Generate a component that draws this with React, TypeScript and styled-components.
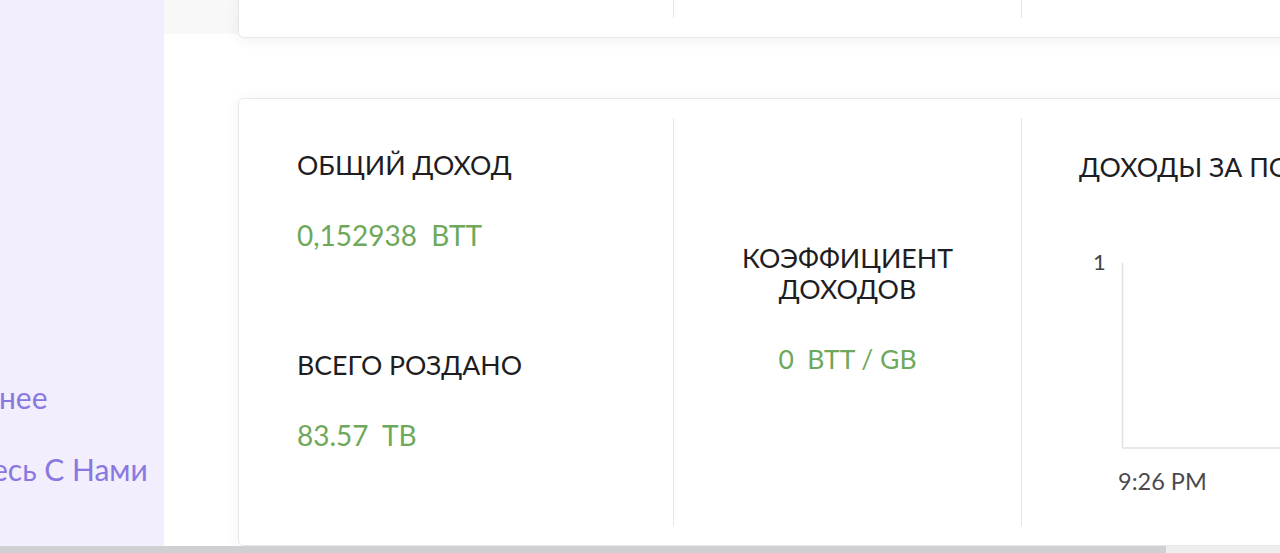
import React from 'react';
import styled, {createGlobalStyle} from 'styled-components';

const GlobalStyle = createGlobalStyle`
    html, body {
        margin: 0;
        padding: 0;
        height: 100%;
        overflow: hidden;
        background: #ffffff;
        font-family: Lato, "Noto Sans", sans-serif;
    }
    #root {
        height: 100%;
    }
`;

const Page = styled.div`
    height: 100vh;
    display: flex;
    flex-direction: column;
`;

const Body = styled.div`
    flex: 1;
    display: flex;
    min-height: 0;
    overflow: hidden;
`;

const Sidebar = styled.aside`
    width: 164px;
    flex-shrink: 0;
    background: #f2eefe;
    overflow: hidden;
    display: flex;
    flex-direction: column;
    justify-content: flex-end;
    padding-bottom: 61px;
    box-sizing: border-box;
`;

const NavLink = styled.a<{$shift: number}>`
    display: block;
    white-space: nowrap;
    margin-left: -${p => p.$shift}px;
    font-size: 30px;
    line-height: 32px;
    color: #8878e0;
    text-decoration: none;
    & + & {
        margin-top: 40px;
    }
`;

const Main = styled.main`
    flex: 1;
    min-width: 0;
    display: flex;
    flex-direction: column;
`;

const TopBand = styled.div`
    background: #f8f8f9;
    height: 34px;
    padding-left: 74px;
`;

const Section = styled.section`
    padding: 64px 0 0 74px;
`;

const Card = styled.div`
    width: 1200px;
    background: #ffffff;
    border: 1px solid #e6e8ec;
    border-radius: 6px;
    box-shadow: 0 2px 14px rgba(40, 50, 70, 0.07);
    box-sizing: border-box;
    display: grid;
    grid-template-columns: 434px 348px 1fr;
`;

const TopCard = styled(Card)`
    height: 38px;
    border-top: none;
    border-radius: 0 0 6px 6px;
    padding-bottom: 19px;
`;

const StatsCard = styled(Card)`
    height: 448px;
    padding: 19px 0;
`;

const Column = styled.div<{$divider?: boolean}>`
    border-left: ${p => (p.$divider ? '1px solid #e4e6ea' : 'none')};
`;

const LeftColumn = styled(Column)`
    padding: 32px 0 0 58px;
`;

const MiddleColumn = styled(Column)`
    padding-top: 125px;
    text-align: center;
`;

const ChartColumn = styled(Column)`
    padding: 34px 0 0 57px;
    overflow: hidden;
`;

const Title = styled.h3`
    margin: 0;
    font-size: 26.7px;
    line-height: 31px;
    font-weight: 400;
    color: #1e1e22;
    text-transform: uppercase;
    white-space: nowrap;
`;

const Value = styled.div<{$size?: number}>`
    margin-top: 39px;
    font-size: ${p => p.$size ?? 28}px;
    line-height: 31px;
    color: #6ea85a;
    white-space: pre;
`;

const StatBlock = styled.div`
    & + & {
        margin-top: 99px;
    }
`;

const Chart = styled.svg`
    display: block;
    margin: 20px 0 0 -57px;
    font-family: Lato, sans-serif;
`;

const TimeLabel = styled.div`
    font-size: 23.5px;
    line-height: 24px;
    color: #4a4a4e;
    margin: 16px 0 0 39px;
`;

const ScrollBar = styled.div`
    height: 7px;
    background: #eeeeef;
    display: flex;
`;

const ScrollThumb = styled.div`
    width: 1166px;
    background: #d0d0d2;
`;

const EarningsChart: React.FC = () => (
    <Chart width="260" height="250" viewBox="0 0 260 250">
        <text x="71" y="67" fontSize="22" fill="#444">1</text>
        <line x1="100.5" y1="60" x2="100.5" y2="245" stroke="#e2e2e4" strokeWidth="1.5"/>
        <line x1="100" y1="245" x2="260" y2="245" stroke="#e2e2e4" strokeWidth="1.5"/>
    </Chart>
);

export const App: React.FC = () => {
    return (
        <Page>
            <GlobalStyle/>
            <Body>
                <Sidebar>
                    <NavLink $shift={109}>Подробнее</NavLink>
                    <NavLink $shift={113}>Свяжитесь С Нами</NavLink>
                </Sidebar>
                <Main>
                    <TopBand>
                        <TopCard>
                            <Column/>
                            <Column $divider/>
                            <Column $divider/>
                        </TopCard>
                    </TopBand>
                    <Section>
                        <StatsCard>
                            <LeftColumn>
                                <StatBlock>
                                    <Title>Общий доход</Title>
                                    <Value>{'0,152938  BTT'}</Value>
                                </StatBlock>
                                <StatBlock>
                                    <Title>Всего роздано</Title>
                                    <Value>{'83.57  TB'}</Value>
                                </StatBlock>
                            </LeftColumn>
                            <MiddleColumn $divider>
                                <Title>Коэффициент<br/>доходов</Title>
                                <Value $size={26.5}>{'0  BTT / GB'}</Value>
                            </MiddleColumn>
                            <ChartColumn $divider>
                                <Title>Доходы за последние 24 часа</Title>
                                <EarningsChart/>
                                <TimeLabel>9:26 PM</TimeLabel>
                            </ChartColumn>
                        </StatsCard>
                    </Section>
                </Main>
            </Body>
            <ScrollBar>
                <ScrollThumb/>
            </ScrollBar>
        </Page>
    );
};

export default App;
